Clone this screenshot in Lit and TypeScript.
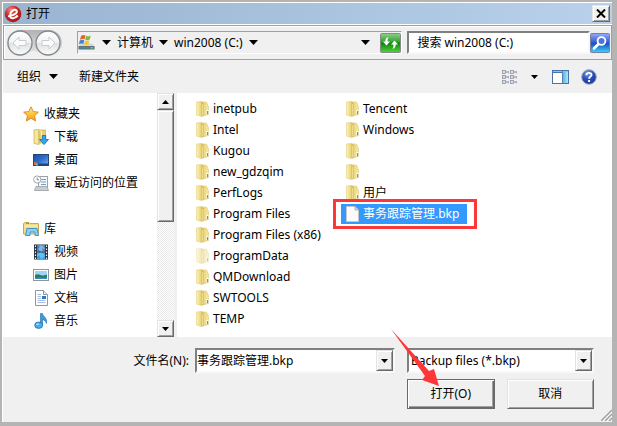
import { LitElement, html, css, svg, TemplateResult } from "lit";
import { customElement, property, state } from "lit/decorators.js";
import { classMap } from "lit/directives/class-map.js";

const icon = (w: number, h: number, body: TemplateResult) =>
  html`<svg width=${w} height=${h} viewBox="0 0 ${w} ${h}" aria-hidden="true">${body}</svg>`;

const caret = () => icon(9, 5, svg`<path d="M0 0h9L4.500 5z" fill="#000"/>`);
const smallCaret = () => icon(7, 4, svg`<path d="M0 0h7L3.500 4z" fill="#000"/>`);
const smallCaretUp = () => icon(7, 4, svg`<path d="M0 4h7L3.500 0z" fill="#000"/>`);

const appLogo = () => icon(18, 18, svg`
  <defs><radialGradient id="r" cx=".35" cy=".25" r=".8"><stop offset="0" stop-color="#ee8a80"/><stop offset=".45" stop-color="#cc2b26"/><stop offset="1" stop-color="#a51512"/></radialGradient></defs>
  <circle cx="9" cy="9" r="8.300" fill="url(#r)"/>
  <path d="M4 11.200C9 11 13.300 8.500 12.800 6C12.200 3.800 8.400 4.400 6.700 8C5.200 11.500 6.500 13.600 9 13.300C10.800 13.100 12.500 12 13.800 10.500" fill="none" stroke="#fff" stroke-width="2"/>`);

const historyArrows = () => icon(56, 28, svg`
  <defs><linearGradient id="p" x2="0" y2="1"><stop offset="0" stop-color="#b2b2b2"/><stop offset="1" stop-color="#e9e9e9"/></linearGradient>
  <linearGradient id="c" x2="0" y2="1"><stop offset="0" stop-color="#fff"/><stop offset=".48" stop-color="#f1f2f3"/><stop offset=".52" stop-color="#dfe2e4"/><stop offset="1" stop-color="#fbfbfb"/></linearGradient></defs>
  <path d="M14 1H43A13 13 0 0 1 43 27C36 27 33 22 28 22S20 27 14 27A13 13 0 0 1 14 1" fill="url(#p)"/>
  <circle cx="14" cy="14" r="12" fill="url(#c)" stroke="#84898d" stroke-width="1.300"/>
  <circle cx="42" cy="14" r="12" fill="url(#c)" stroke="#84898d" stroke-width="1.300"/>
  <path d="M7 14L13 8V11.500H20V16.500H13V20Z" fill="#fcfcfc" stroke="#c9cccd"/>
  <path d="M49 14L43 8V11.500H36V16.500H43V20Z" fill="#fcfcfc" stroke="#c9cccd"/>`);

const driveIcon = () => icon(17, 17, svg`
  <path d="M2.500 9.500H14L16.500 12.500H.5Z" fill="#d2d6d8"/>
  <path d="M.5 12H16.500V15.500H.5Z" fill="#63717a"/><path d="M2 13H11V14.500H2Z" fill="#3c8fb0"/><path d="M12.500 13H15V14.500H12.500Z" fill="#53e04b"/>
  <path d="M3 2C4.500 .7 6 .7 7.500 1.500L6.500 5.500C5 4.800 3.500 4.900 2 5.800Z" fill="#e9602b"/>
  <path d="M8.200 1.800C10 2.700 11.200 2.600 12.800 1.600L11.700 5.600C10.200 6.600 8.700 6.500 7.200 5.700Z" fill="#7dbb3c"/>
  <path d="M1.800 6.500C3.300 5.500 4.800 5.500 6.300 6.200L5.300 10C3.800 9.300 2.300 9.300 .8 10.200Z" fill="#3f83d6"/>
  <path d="M7 6.500C8.600 7.400 10 7.300 11.500 6.300L10.500 10.200C9 11.200 7.500 11.100 6 10.300Z" fill="#f8c52c"/>`);

const refreshIcon = () => icon(21, 20, svg`
  <defs><linearGradient id="g" x2="0" y2="1"><stop offset="0" stop-color="#8fcf8c"/><stop offset=".45" stop-color="#2fa02c"/><stop offset=".5" stop-color="#0c8410"/><stop offset="1" stop-color="#51d43c"/></linearGradient></defs>
  <rect x=".5" y=".5" width="20" height="19" rx="1" fill="url(#g)" stroke="#848c86"/>
  <path d="M8.500 4C6 4.500 5.200 6.500 5.400 8.500H3L6.500 12.500L10 8.500H7.600C7.500 6.500 7.800 5.500 8.500 4Z" fill="#fff"/>
  <path d="M12.500 16C15 15.500 15.800 13.500 15.600 11.500H18L14.500 7.500L11 11.500H13.400C13.500 13.500 13.200 14.500 12.500 16Z" fill="#fff"/>`);

const searchIcon = () => icon(20, 20, svg`
  <defs><linearGradient id="s" x2="0" y2="1"><stop offset="0" stop-color="#98aef0"/><stop offset=".48" stop-color="#3158d4"/><stop offset=".52" stop-color="#1650c4"/><stop offset="1" stop-color="#3fd5f6"/></linearGradient></defs>
  <rect x=".5" y=".5" width="19" height="19" rx="1" fill="url(#s)" stroke="#7480a4"/>
  <path d="M4 15.500L8.500 11" stroke="#fff" stroke-width="2.600" stroke-linecap="round"/>
  <circle cx="11.500" cy="8" r="3.900" fill="#4b74d8" stroke="#fff" stroke-width="1.800"/>`);

const viewIcon = () => icon(15, 14, svg`${[0, 8].map(x => [0, 5, 10].map(y => svg`
  <rect x=${x + 0.5} y=${y + 0.5} width="3" height="3" fill="#fff" stroke="#8a93a3" stroke-width=".8"/>
  <path d="M${x + 4} ${y + 2}h3" stroke="#7c879a"/><path d="M${x + 6.5} ${y + 1}v2.500" stroke="#aab2c0"/>
  <rect x=${x + 1.5} y=${y + 1.5} width="1" height="1" fill=${y === 5 ? "#c8342c" : "#5d7fb0"}/>`))}`);

const paneIcon = () => icon(17, 14, svg`
  <defs><linearGradient id="n" x2="1"><stop offset="0" stop-color="#5cb8dc"/><stop offset="1" stop-color="#b4e4f2"/></linearGradient></defs>
  <rect x=".5" y=".5" width="16" height="13" fill="#fff" stroke="#4773a8"/><path d="M1 1.500H16" stroke="#9dbbdc"/><path d="M1 2.500H10" stroke="#4773a8"/>
  <path d="M10.500 1V13" stroke="#5183b8"/><rect x="11" y="2" width="5" height="11" fill="url(#n)"/>`);

const helpIcon = () => icon(16, 16, svg`
  <defs><radialGradient id="h" cx=".4" cy=".25" r=".8"><stop offset="0" stop-color="#7b9be4"/><stop offset=".5" stop-color="#2a4fb8"/><stop offset="1" stop-color="#1c3793"/></radialGradient></defs>
  <circle cx="8" cy="8" r="7.300" fill="url(#h)" stroke="#99a6c4"/>
  <path d="M5.300 6.200C5.500 3 10.900 3.200 10.500 6.100C10.300 7.600 8.200 7.700 8.100 9.700" fill="none" stroke="#fff" stroke-width="1.900"/><rect x="7.100" y="11" width="2" height="2" fill="#fff"/>`);

const folderIcon = () => icon(13, 16, svg`
  <defs><linearGradient id="f" x2="1"><stop offset="0" stop-color="#fbf3b8"/><stop offset="1" stop-color="#e9d170"/></linearGradient>
  <linearGradient id="f2" x2="1"><stop offset="0" stop-color="#e6cc69"/><stop offset="1" stop-color="#f7e9a0"/></linearGradient></defs>
  <path d="M5 .8L10.500 1.200L12.600 6V13.500L6 15Z" fill="url(#f2)" stroke="#dcc574" stroke-width=".6"/>
  <path d="M.4 1L5.500 .5V15.500L.4 14Z" fill="url(#f)" stroke="#e0cc80" stroke-width=".6"/>
  <path d="M5.500 .8L8 2.500V15L5.500 15.600Z" fill="#d8bb58"/><path d="M6.800 3V14.500" stroke="#f8ecb0" stroke-width=".9"/>
  <path d="M11.500 9V13.300" stroke="#fff" stroke-width="2"/><path d="M11.600 10V13.300" stroke="#3f9fe0" stroke-width="1.200"/>`);

const pageIcon = () => icon(13, 16, svg`
  <path d="M.5 .5H9L12.500 4V15.500H.5Z" fill="#fbfbfb" stroke="#c3c6ca"/><path d="M9 .5V4H12.500Z" fill="#dfe1e3" stroke="#a4a8ad" stroke-width=".8"/>`);

const places: Record<string, () => TemplateResult> = {
  star: () => icon(16, 16, svg`<defs><linearGradient id="t" x2="0" y2="1"><stop offset="0" stop-color="#fff3a8"/><stop offset=".55" stop-color="#fbc233"/><stop offset="1" stop-color="#f49a25"/></linearGradient></defs>
    <path d="M8 .8L10.200 5.600L15.400 6.200L11.500 9.800L12.700 15L8 12.300L3.300 15L4.500 9.800L.6 6.200L5.800 5.600Z" fill="url(#t)" stroke="#d98427" stroke-width=".9"/>`),
  download: () => icon(16, 16, svg`<path d="M1 1L6 .5V15.500L1 14.500Z" fill="#f7e79d" stroke="#cfb45b" stroke-width=".8"/><path d="M6 1H12.500V14H6Z" fill="#e8cf72" stroke="#cfb45b" stroke-width=".8"/><path d="M6.500 1.500L8.500 2.500V14" fill="none" stroke="#fbf3c6"/>
    <path d="M9.300 6.500H12.700V10.500H15.500L11 15.600L6.500 10.500H9.300Z" fill="#35a4e8" stroke="#1668b4" stroke-width=".8"/>`),
  desktop: () => icon(16, 16, svg`<defs><linearGradient id="d" x2="1" y2="1"><stop offset="0" stop-color="#1a4ba8"/><stop offset=".5" stop-color="#2c6fcd"/><stop offset="1" stop-color="#7fb3ee"/></linearGradient></defs>
    <rect x=".5" y="2.500" width="15" height="11" fill="url(#d)" stroke="#28476e"/><path d="M1 12.500H15" stroke="#274569" stroke-width="2"/><path d="M1 10L4 10.500V13H1Z" fill="#e46a32"/><path d="M2.500 11.500H5V13.500H2.500Z" fill="#4ac0e8"/>`),
  recent: () => icon(16, 16, svg`<rect x="5.500" y="1.500" width="9" height="11" fill="#f4f7fa" stroke="#9aa3ab"/><path d="M8 4.500H13M8 7H13M8 9.500H13" stroke="#6f9fc8"/>
    <path d="M3 11.500H14L15.500 15.500H1.500Z" fill="#c9cdd1" stroke="#9a9fa4" stroke-width=".8"/><circle cx="4.200" cy="4.500" r="3.600" fill="#fff" stroke="#a0a8ae"/><path d="M4.200 2.500V4.800H6" fill="none" stroke="#667" stroke-width=".8"/>`),
  library: () => icon(16, 16, svg`<path d="M.5 2.500L2 1.500H6L7 2.500H15.500V13H.5Z" fill="#f2dc88" stroke="#c6a950"/><path d="M1 5H15" stroke="#fbf2c0"/><path d="M3 2.500H6" stroke="#62b04b"/>
    <path d="M4 7.500H14L15.500 14.500H12V11H7V14.500H2.500Z" fill="#8fd0f2" stroke="#3d97cf"/>`),
  video: () => icon(16, 16, svg`<rect x="1" y=".5" width="14" height="15" fill="#27323a"/><rect x="4" y="1" width="8" height="14" fill="#459be2"/><path d="M4 1L8 4L12 1V6L8 8L4 6Z" fill="#5b6fb1"/><path d="M8 1L12 4L9 8L12 12L8 15L6 11L4 13V10L8 8L5 5Z" fill="#64c0f0"/><path d="M4 8H12" stroke="#2d4663"/><path d="M9 4L12 6L10 8Z" fill="#d35b3c"/>
    <path d="M2.500 1.500V15M13.500 1.500V15" stroke="#edf2f5" stroke-width="1.200" stroke-dasharray="1.500 1.500"/>`),
  picture: () => icon(16, 16, svg`<rect x=".5" y="2.500" width="15" height="11" fill="#fff" stroke="#8c979e"/><rect x="2" y="4" width="12" height="8" fill="#9bd6f6"/><path d="M2 8C5 6 7 8 9 8.500S12 7 14 8V12H2Z" fill="#2c7d57"/><path d="M2 10.500H14V12H2Z" fill="#3c86c4"/>`),
  document: () => icon(16, 16, svg`<path d="M2.500 .5H10.500L14.500 4.500V15.500H2.500Z" fill="#fff" stroke="#8f979f"/><path d="M10.500 .5V4.500H14.500" fill="#e4e8ec" stroke="#8f979f"/><path d="M4.500 4.500H8M4.500 6.500H8M4.500 8.500H8M4.500 10.500H12.500M4.500 12.500H12.500" stroke="#a9bade"/><rect x="9" y="6" width="4" height="3" fill="#2b77c8"/>`),
  music: () => icon(16, 16, svg`<path d="M7.500 .5H9.500C10 4 14.500 4.500 13.500 10.500C12.800 7.800 11 7 9.500 6.500V12H7.500Z" fill="#349bdc" stroke="#1b69ab" stroke-width=".6"/><ellipse cx="5.700" cy="12.200" rx="4" ry="3.200" fill="#4aaee8" stroke="#1d6eb0" stroke-width=".8"/><ellipse cx="4.700" cy="11.300" rx="1.500" ry=".8" fill="#b8e2fa"/>`),
};

interface FileEntry { name: string; kind: "folder" | "hidden" | "file"; }

const folder = (name: string): FileEntry => ({ name, kind: "folder" });
const FILES: FileEntry[] = [
  ...["inetpub", "Intel", "Kugou", "new_gdzqim", "PerfLogs", "Program Files", "Program Files (x86)"].map(folder),
  { name: "ProgramData", kind: "hidden" },
  ...["QMDownload", "SWTOOLS", "TEMP", "Tencent", "Windows", "", "", "用户"].map(folder),
  { name: "事务跟踪管理.bkp", kind: "file" },
];

const PLACES = [
  { label: "收藏夹", icon: "star", children: [["下载", "download"], ["桌面", "desktop"], ["最近访问的位置", "recent"]] },
  { label: "库", icon: "library", children: [["视频", "video"], ["图片", "picture"], ["文档", "document"], ["音乐", "music"]] },
];

const base = css`
  * { box-sizing: border-box; }
  svg { display: block; flex: none; }
  button, input, select {
    font: inherit; color: inherit; margin: 0; padding: 0; border: 0; border-radius: 0; background: none; outline: none;
  }
  button { display: flex; align-items: center; white-space: nowrap; }
  ul { list-style: none; margin: 0; padding: 0; }
  .raised {
    justify-content: center; background: #f0f0f0; border: 1px solid; border-color: #e3e3e3 #696969 #696969 #e3e3e3;
    box-shadow: inset 1px 1px #fff, inset -1px -1px #a0a0a0;
  }
  .sunken { background: #fff; border: 2px solid; border-color: #808080 #f8f8f8 #f8f8f8 #808080; }
`;

@customElement("address-bar")
class AddressBar extends LitElement {
  static styles = [base, css`
    :host { display: flex; align-items: center; height: 35px; padding: 0 1px 0 2px; border: 1px solid #a0a0a0; box-shadow: inset 1px 1px #fff; }
    .history { margin-right: 15px; }
    .path { flex: 324 1 0; min-width: 0; height: 23px; display: flex; align-items: center; gap: 6px; border: 1px solid; border-color: #a0a0a0 #fff #fff #a0a0a0; }
    .crumbs { flex: 1; display: flex; align-items: center; gap: 6px; height: 18px; padding-left: 1px; }
    .crumb { gap: 6px; }
    .more { margin-right: 4px; }
    .search { flex: 203 1 0; min-width: 0; display: flex; align-items: center; margin-left: 5px; }
    .query { flex: 1; min-width: 0; height: 23px; padding: 0 8px; }
    .query::placeholder { color: #000; opacity: 1; }
  `];
  render() {
    return html`
      <button class="history" aria-label="后退 / 前进">${historyArrows()}</button>
      <div class="path">
        ${driveIcon()}
        <nav class="crumbs" aria-label="路径">
          ${caret()}
          <button class="crumb">计算机 ${caret()}</button>
          <button class="crumb">win2008 (C:) ${caret()}</button>
        </nav>
        <button class="more" aria-label="以前的位置">${caret()}</button>
        <button aria-label="刷新">${refreshIcon()}</button>
      </div>
      <div class="search">
        <input class="query sunken" type="search" aria-label="搜索" placeholder="搜索 win2008 (C:)" />
        <button aria-label="开始搜索">${searchIcon()}</button>
      </div>`;
  }
}

@customElement("places-pane")
class PlacesPane extends LitElement {
  static styles = [base, css`
    :host { display: flex; background: #fff; }
    .tree { flex: 1; min-width: 0; padding: 9px 0 5px 20px; display: flex; flex-direction: column; gap: 23px; }
    .place { width: 100%; height: 23px; gap: 5px; }
    .children { padding-left: 10px; }
    .scroll { flex: none; width: 17px; display: flex; flex-direction: column; background: repeating-conic-gradient(#fff 0 25%, #e9e9e9 0 50%) 0 0 / 2px 2px; }
    .step { height: 17px; }
    .thumb { flex: 111; }
    .track { flex: 99; }
  `];
  render() {
    return html`
      <nav class="tree">
        ${PLACES.map(g => html`<div>
          <button class="place">${places[g.icon]()}${g.label}</button>
          <ul class="children">
            ${g.children.map(([label, name]) => html`<li><button class="place">${places[name]()}${label}</button></li>`)}
          </ul>
        </div>`)}
      </nav>
      <div class="scroll">
        <button class="step raised" aria-label="向上滚动">${smallCaretUp()}</button>
        <div class="thumb raised"></div>
        <div class="track"></div>
        <button class="step raised" aria-label="向下滚动">${smallCaret()}</button>
      </div>`;
  }
}

@customElement("file-list")
class FileListView extends LitElement {
  @property({ attribute: false }) selected = "";
  static styles = [base, css`
    :host { display: block; background: #fff; padding: 6px 14px; }
    .files { display: grid; grid-auto-flow: column; grid-template-rows: repeat(11, 21px); grid-auto-columns: 150px; }
    .file { position: relative; height: 20px; gap: 4px; padding: 0 8px 0 5px; }
    .hidden svg { opacity: 0.5; }
    .selected { background: #3399ff; color: #fff; }
    .selected::after { content: ""; position: absolute; inset: -5px -10px -5px -8px; border: 3px solid #fd3739; }
  `];
  render() {
    return html`<ul class="files">
      ${FILES.map(f => html`<li>
        <button class=${classMap({ file: true, hidden: f.kind === "hidden", selected: f.name === this.selected })}
          aria-label=${f.name || "文件夹"}
          @click=${() => this.dispatchEvent(new CustomEvent("pick", { detail: f.name }))}>
          ${f.kind === "file" ? pageIcon() : folderIcon()}<span>${f.name}</span>
        </button></li>`)}
    </ul>`;
  }
}

@customElement("app-root")
class AppRoot extends LitElement {
  @state() private selected = "事务跟踪管理.bkp";
  static styles = [base, css`
    :host {
      display: block; background: #b4b4b4; padding: 2px 5px 4px 2px; color: #000;
      font: 12px/18px "Noto Sans", "Noto Sans CJK SC", sans-serif;
    }
    .dialog { background: #f0f0f0; border: 1px solid #fff; border-width: 1px 0 0 1px; }
    .title { display: flex; align-items: center; gap: 4px; height: 22px; padding: 0 2px 0 1px; background: linear-gradient(90deg, #99b4d1, #b9d1ea); border-bottom: 1px solid #fff; }
    .title h1 { flex: 1; margin: 0; font: inherit; }
    .close { width: 18px; height: 17px; }
    .toolbar { display: flex; align-items: center; height: 33px; padding: 0 15px 0 14px; }
    .organize { gap: 8px; margin-right: 21px; }
    .tools { flex: 1; display: flex; align-items: center; justify-content: flex-end; gap: 12px; }
    .view { gap: 14px; margin-right: 2px; }
    .panes { display: grid; grid-template-columns: 171px minmax(0, 1fr); gap: 3px; }
    .footer { position: relative; display: grid; grid-template-columns: minmax(0, 392px) minmax(0, 187px); column-gap: 12px; row-gap: 6px; padding: 11px 18px 13px 0; }
    .name { display: flex; align-items: center; justify-content: flex-end; gap: 6px; }
    .combo { display: grid; grid-template-columns: minmax(0, 1fr) 17px; height: 25px; }
    .name .combo { width: 200px; }
    .combo select { grid-area: 1 / 1 / 2 / 3; appearance: none; padding: 0 19px 0 2px; }
    .drop { grid-area: 1 / 2; pointer-events: none; display: flex; align-items: center; }
    .actions { grid-column: 2; display: grid; grid-template-columns: 1fr 1fr; gap: 12px; }
    .action { position: relative; height: 30px; }
    .default { border-color: #696969; box-shadow: inset 1px 1px #fff, inset -1px -1px #696969, inset -2px -2px #a0a0a0; }
    .pointer { position: absolute; right: 54px; bottom: 21px; pointer-events: none; }
    .grip { position: absolute; right: 0; bottom: 1px; }
  `];
  render() {
    return html`<main class="dialog">
      <header class="title">
        ${appLogo()}<h1>打开</h1>
        <button class="close raised" aria-label="关闭">${icon(10, 9, svg`<path d="M1 .5L9 8.500M9 .5L1 8.500" stroke="#000" stroke-width="2"/>`)}</button>
      </header>
      <address-bar></address-bar>
      <div class="toolbar">
        <button class="organize">组织 ${caret()}</button>
        <button>新建文件夹</button>
        <div class="tools">
          <button class="view" aria-label="更改视图">${viewIcon()}${smallCaret()}</button>
          <button aria-label="预览窗格">${paneIcon()}</button>
          <button aria-label="帮助">${helpIcon()}</button>
        </div>
      </div>
      <div class="panes">
        <places-pane></places-pane>
        <file-list .selected=${this.selected} @pick=${(e: CustomEvent) => { this.selected = e.detail; }}></file-list>
      </div>
      <form class="footer" @submit=${(e: Event) => e.preventDefault()}>
        <div class="name">
          <label for="name">文件名(N):</label>
          <div class="combo sunken">
            <input id="name" type="text" .value=${this.selected} />
            <button type="button" class="raised" aria-label="最近的文件名">${smallCaret()}</button>
          </div>
        </div>
        <div class="combo sunken">
          <select aria-label="文件类型"><option>Backup files (*.bkp)</option></select>
          <span class="drop raised">${smallCaret()}</span>
        </div>
        <div class="actions">
          <button class="action raised default" type="submit">打开(O)
            <svg class="pointer" width="49" height="58" viewBox="0 0 49 58" aria-hidden="true"><path d="M0 0L38 42L43 40L48 57L31 51L34 47Z" fill="#fd3739"/></svg>
          </button>
          <button class="action raised" type="button">取消</button>
        </div>
        <svg class="grip" width="11" height="12" viewBox="0 0 11 12" aria-hidden="true">
          <path d="M0 12L11 1M4 12L11 5M8 12L11 9" stroke="#a0a0a0" stroke-width="1.500"/><path d="M2 12L11 3M6 12L11 7" stroke="#fff"/>
        </svg>
      </form>
    </main>`;
  }
}
